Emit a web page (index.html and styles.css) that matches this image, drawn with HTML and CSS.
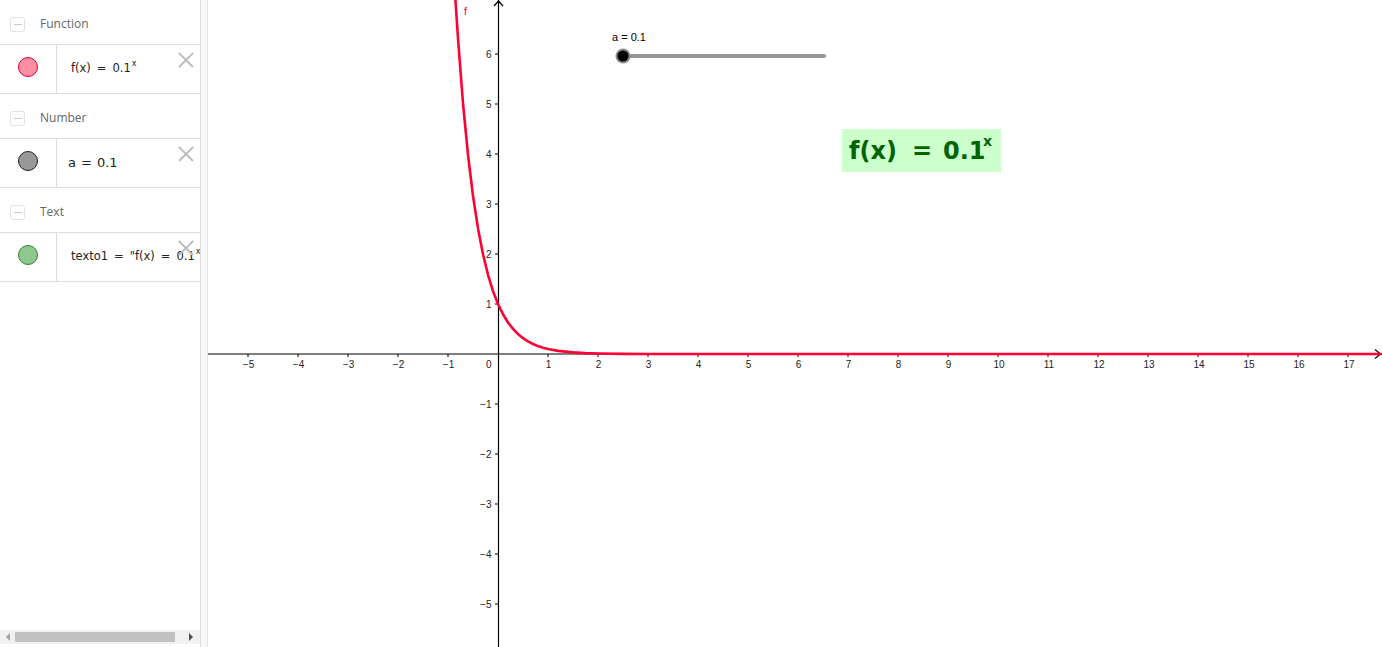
FILE: index.html
```html
<!DOCTYPE html>
<html>
<head>
<meta charset="utf-8">
<link rel="stylesheet" href="styles.css">
</head>
<body>
<div class="app">
  <div class="panel">
    <div class="list">
      <div class="section-header"><span class="toggle"><span class="minus"></span></span><span class="section-title">Function</span></div>
      <div class="item">
        <div class="marble-cell"><span class="marble marble-fn"></span></div>
        <div class="formula">f(x)<span class="eq">=</span>0.1<sup>x</sup></div>
        <span class="close"></span>
      </div>
      <div class="section-header"><span class="toggle"><span class="minus"></span></span><span class="section-title">Number</span></div>
      <div class="item">
        <div class="marble-cell"><span class="marble marble-num"></span></div>
        <div class="formula formula-num">a<span class="eq">=</span>0.1</div>
        <span class="close"></span>
      </div>
      <div class="section-header"><span class="toggle"><span class="minus"></span></span><span class="section-title">Text</span></div>
      <div class="item">
        <div class="marble-cell"><span class="marble marble-txt"></span></div>
        <div class="formula">texto1<span class="eq">=</span>"f(x)<span class="eq">=</span>0.1<sup>x</sup>"</div>
        <span class="close"></span>
      </div>
    </div>
    <div class="hscroll">
      <span class="arrow-l"></span>
      <span class="thumb"></span>
      <span class="arrow-r"></span>
    </div>
  </div>
  <div class="divider"></div>
  <div class="graph">
    <svg class="canvas" width="1174" height="647" viewBox="208 0 1174 647" xmlns="http://www.w3.org/2000/svg">
      <g stroke="#000" stroke-width="1.2" fill="none">
        <line x1="208" y1="354" x2="1381" y2="354"/>
        <line x1="498.5" y1="0" x2="498.5" y2="647"/>
        <polyline points="1375,349.5 1380.5,354 1375,358.5"/>
        <polyline points="494,6 498.5,1 503,6"/>
      </g>
      <g stroke="#000" stroke-width="1">
        <line x1="248" y1="354" x2="248" y2="357"/>
        <line x1="298" y1="354" x2="298" y2="357"/>
        <line x1="348" y1="354" x2="348" y2="357"/>
        <line x1="398" y1="354" x2="398" y2="357"/>
        <line x1="448" y1="354" x2="448" y2="357"/>
        <line x1="548" y1="354" x2="548" y2="357"/>
        <line x1="598" y1="354" x2="598" y2="357"/>
        <line x1="648" y1="354" x2="648" y2="357"/>
        <line x1="698" y1="354" x2="698" y2="357"/>
        <line x1="748" y1="354" x2="748" y2="357"/>
        <line x1="798" y1="354" x2="798" y2="357"/>
        <line x1="848" y1="354" x2="848" y2="357"/>
        <line x1="898" y1="354" x2="898" y2="357"/>
        <line x1="948" y1="354" x2="948" y2="357"/>
        <line x1="998" y1="354" x2="998" y2="357"/>
        <line x1="1048" y1="354" x2="1048" y2="357"/>
        <line x1="1098" y1="354" x2="1098" y2="357"/>
        <line x1="1148" y1="354" x2="1148" y2="357"/>
        <line x1="1198" y1="354" x2="1198" y2="357"/>
        <line x1="1248" y1="354" x2="1248" y2="357"/>
        <line x1="1298" y1="354" x2="1298" y2="357"/>
        <line x1="1348" y1="354" x2="1348" y2="357"/>
        <line x1="495" y1="54" x2="498.5" y2="54"/>
        <line x1="495" y1="104" x2="498.5" y2="104"/>
        <line x1="495" y1="154" x2="498.5" y2="154"/>
        <line x1="495" y1="204" x2="498.5" y2="204"/>
        <line x1="495" y1="254" x2="498.5" y2="254"/>
        <line x1="495" y1="304" x2="498.5" y2="304"/>
        <line x1="495" y1="404" x2="498.5" y2="404"/>
        <line x1="495" y1="454" x2="498.5" y2="454"/>
        <line x1="495" y1="504" x2="498.5" y2="504"/>
        <line x1="495" y1="554" x2="498.5" y2="554"/>
        <line x1="495" y1="604" x2="498.5" y2="604"/>
      </g>
      <g class="ticklabel" text-anchor="middle">
        <text x="248.5" y="368">−5</text>
        <text x="298.5" y="368">−4</text>
        <text x="348.5" y="368">−3</text>
        <text x="398.5" y="368">−2</text>
        <text x="448.5" y="368">−1</text>
        <text x="548.5" y="368">1</text>
        <text x="598.5" y="368">2</text>
        <text x="648.5" y="368">3</text>
        <text x="698.5" y="368">4</text>
        <text x="748.5" y="368">5</text>
        <text x="798.5" y="368">6</text>
        <text x="848.5" y="368">7</text>
        <text x="898.5" y="368">8</text>
        <text x="948.5" y="368">9</text>
        <text x="999" y="368">10</text>
        <text x="1049" y="368">11</text>
        <text x="1099" y="368">12</text>
        <text x="1149" y="368">13</text>
        <text x="1199" y="368">14</text>
        <text x="1249" y="368">15</text>
        <text x="1299" y="368">16</text>
        <text x="1349" y="368">17</text>
      </g>
      <g class="ticklabel" text-anchor="end">
        <text x="491.5" y="368">0</text>
        <text x="491.5" y="57.5">6</text>
        <text x="491.5" y="107.5">5</text>
        <text x="491.5" y="157.5">4</text>
        <text x="491.5" y="207.5">3</text>
        <text x="491.5" y="257.5">2</text>
        <text x="491.5" y="307.5">1</text>
        <text x="491.5" y="407.5">−1</text>
        <text x="491.5" y="457.5">−2</text>
        <text x="491.5" y="507.5">−3</text>
        <text x="491.5" y="557.5">−4</text>
        <text x="491.5" y="607.5">−5</text>
      </g>
      <path d="M455.3,-2 L458,38.5 L463,103.4 L468,154.9 L473,195.9 L478,228.4 L483,254.2 L488,274.8 L493,291.1 L498,304 L503,314.3 L508,322.5 L513,328.9 L518,334.1 L523,338.2 L528,341.4 L533,344 L538,346.1 L543,347.7 L548,349 L558,350.85 L573,352.4 L585,353.1 L598,353.5 L623,353.85 L648,353.95 L1382,354" stroke="#ff0033" stroke-width="2.6" fill="none" stroke-linejoin="round"/>
      <text class="fn-label" x="464" y="15">f</text>
      <text class="slider-label" x="612" y="41">a = 0.1</text>
      <line x1="623" y1="56" x2="824" y2="56" stroke="#959595" stroke-width="4" stroke-linecap="round"/>
      <circle cx="623" cy="56" r="7.5" fill="#8a8a8a"/>
      <circle cx="623" cy="56" r="5.5" fill="#000"/>
      <rect x="842" y="129" width="159" height="43" fill="#ccffcc"/>
      <text class="big-text" y="159"><tspan x="849">f(x)</tspan><tspan x="912">=</tspan><tspan x="943">0.1</tspan><tspan class="big-sup" x="983" y="146">x</tspan></text>
    </svg>
  </div>
</div>
</body>
</html>
```

FILE: styles.css
```css
html, body {
  margin: 0;
  padding: 0;
  background: #fff;
}
.app {
  display: flex;
  width: 1382px;
  height: 647px;
  overflow: hidden;
}
.panel {
  width: 200px;
  height: 647px;
  display: flex;
  flex-direction: column;
  overflow: hidden;
  font-family: "Liberation Sans", Arial, sans-serif;
  background: #fff;
  flex-shrink: 0;
}
.list {
  flex: 1;
}
.section-header {
  height: 44px;
  border-bottom: 1px solid #dcdcdc;
  display: flex;
  align-items: center;
  padding-left: 10px;
  padding-top: 2px;
  box-sizing: border-box;
  height: 45px;
}
.toggle {
  width: 15px;
  height: 15px;
  border: 1px solid #e2e2e2;
  border-radius: 3px;
  display: flex;
  align-items: center;
  justify-content: center;
  box-sizing: border-box;
  margin-top: 2px;
}
.minus {
  width: 8px;
  height: 1px;
  background: #c8c8c8;
}
.section-title {
  margin-left: 15px;
  font-size: 12px;
  color: #666;
  font-family: "Open Sans", "Liberation Sans", sans-serif;
}
.item {
  height: 49px;
  box-sizing: border-box;
  border-bottom: 1px solid #dcdcdc;
  display: flex;
  position: relative;
  overflow: hidden;
}
.marble-cell {
  width: 57px;
  flex-shrink: 0;
  border-right: 1px solid #dcdcdc;
  display: flex;
  justify-content: center;
  align-items: flex-start;
  padding-top: 12px;
  padding-right: 1px;
  box-sizing: border-box;
}
.marble {
  width: 20px;
  height: 20px;
  border-radius: 50%;
  box-sizing: border-box;
}
.marble-fn {
  background: #ff8fa3;
  border: 1px solid #d9003a;
}
.marble-num {
  background: #999;
  border: 1px solid #222;
}
.marble-txt {
  background: #8fc88f;
  border: 1px solid #2f862f;
}
.formula {
  padding-left: 14px;
  display: flex;
  align-items: center;
  white-space: nowrap;
  font-family: "DejaVu Sans", sans-serif;
  font-size: 11.5px;
  color: #222;
  margin-top: -2px;
}
.formula sup {
  font-size: 8px;
  align-self: flex-start;
  margin-top: 16px;
  margin-left: 1px;
}
.formula-num {
  font-size: 13px;
  padding-left: 11px;
}
.formula-num .eq {
  margin: 0 5px;
}
.eq {
  margin: 0 6px;
}
.close {
  position: absolute;
  left: 178px;
  top: 7px;
  width: 16px;
  height: 16px;
}
.close::before, .close::after {
  content: "";
  position: absolute;
  left: -2px;
  top: 7px;
  width: 20px;
  height: 1.6px;
  background: #bdbdbd;
  transform: rotate(45deg);
}
.close::after {
  transform: rotate(-45deg);
}
.hscroll {
  height: 14px;
  margin-bottom: 3px;
  background: #f1f1f1;
  display: flex;
  align-items: center;
  padding: 0 4px;
  gap: 5px;
}
.thumb {
  flex: 1;
  height: 10px;
  background: #c1c1c1;
}
.arrow-l {
  width: 0;
  height: 0;
  border-top: 4px solid transparent;
  border-bottom: 4px solid transparent;
  border-right: 4px solid #a3a3a3;
  margin-left: 2px;
}
.arrow-r {
  width: 0;
  height: 0;
  border-top: 4px solid transparent;
  border-bottom: 4px solid transparent;
  border-left: 4px solid #505050;
  margin-right: 3px;
  margin-left: 9px;
}
.divider {
  width: 8px;
  height: 647px;
  flex-shrink: 0;
  box-sizing: border-box;
  border-left: 1px solid #dedede;
  border-right: 1px solid #e6e6e6;
  background: #f6f6f6;
}
.graph {
  flex: 1;
  height: 647px;
}
.canvas {
  display: block;
}
.ticklabel {
  font-family: "Liberation Sans", Arial, sans-serif;
  font-size: 10px;
  fill: #222;
}
.fn-label {
  font-family: "Liberation Sans", Arial, sans-serif;
  font-size: 11px;
  fill: #ff0033;
}
.slider-label {
  font-family: "Liberation Sans", Arial, sans-serif;
  font-size: 11px;
  fill: #000;
}
.big-text {
  font-family: "DejaVu Sans", sans-serif;
  font-weight: bold;
  font-size: 24px;
  fill: #006400;
}
.big-sup {
  font-size: 14px;
}
```
